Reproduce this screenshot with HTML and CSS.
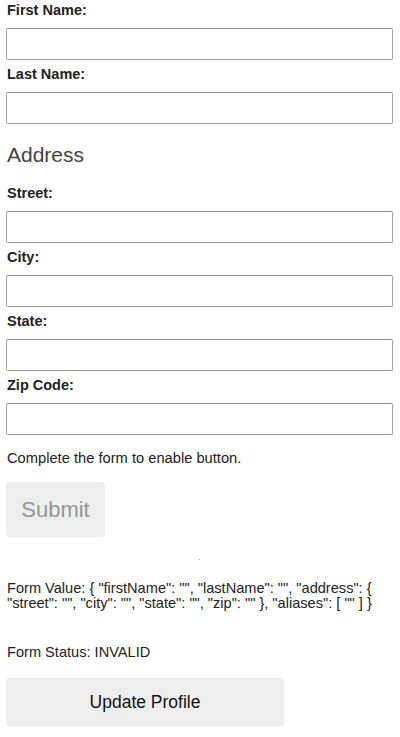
FILE: index.html
```html
<!DOCTYPE html>
<html>
<head>
<meta charset="utf-8">
<link rel="stylesheet" href="styles.css">
</head>
<body>
<div class="page">
  <form class="profile">
    <div class="field">
      <label class="label">First Name:</label>
      <input class="input" type="text">
    </div>
    <div class="field">
      <label class="label">Last Name:</label>
      <input class="input" type="text">
    </div>
    <div class="address">
      <h2 class="heading">Address</h2>
      <div class="field">
        <label class="label">Street:</label>
        <input class="input" type="text">
      </div>
      <div class="field">
        <label class="label">City:</label>
        <input class="input" type="text">
      </div>
      <div class="field">
        <label class="label">State:</label>
        <input class="input" type="text">
      </div>
      <div class="field">
        <label class="label">Zip Code:</label>
        <input class="input" type="text">
      </div>
    </div>
    <p class="hint">Complete the form to enable button.</p>
    <button class="submit" type="button" disabled>Submit</button>
  </form>
  <div class="divider"><span class="dot"></span></div>
  <p class="value">Form Value: { "firstName": "", "lastName": "", "address": { "street": "", "city": "", "state": "", "zip": "" }, "aliases": [ "" ] }</p>
  <p class="status">Form Status: INVALID</p>
  <button class="update" type="button">Update Profile</button>
</div>
</body>
</html>
```
FILE: styles.css
```css
html, body {
  margin: 0;
  padding: 0;
  background: #ffffff;
}
body {
  font-family: "Liberation Sans", Arial, sans-serif;
  color: #222;
}
.page {
  width: 387px;
  padding: 2px 0 0 6px;
}
.profile {
  display: flex;
  flex-direction: column;
  margin: 0;
}
.field {
  display: flex;
  flex-direction: column;
  padding-bottom: 6px;
}
.label {
  display: block;
  font-size: 14.5px;
  line-height: 16px;
  font-weight: bold;
  color: #222;
  margin: 0 0 10px 1px;
}
.input {
  box-sizing: border-box;
  width: 387px;
  height: 32px;
  margin: 0;
  border: 1px solid #a3a3a3;
  border-top-color: #8a8a8a;
  border-radius: 2px;
  background: #fff;
  font-family: inherit;
  font-size: 13px;
  padding: 0 6px;
}
.address {
  display: flex;
  flex-direction: column;
}
.heading {
  font-size: 21px;
  line-height: 24px;
  font-weight: normal;
  color: #444;
  margin: 13px 0 18px 1px;
}
.hint {
  font-size: 14.7px;
  line-height: 16px;
  color: #222;
  margin: 9px 0 16px 1px;
}
.submit {
  align-self: flex-start;
  box-sizing: border-box;
  width: 99px;
  height: 55px;
  border: none;
  border-radius: 4px;
  background: #eeeeee;
  color: #979797;
  font-family: inherit;
  font-size: 22px;
  line-height: 25px;
  padding: 0;
  margin: 0;
}
.divider {
  display: flex;
  justify-content: center;
  padding-top: 22px;
  height: 1px;
}
.dot {
  display: block;
  width: 1px;
  height: 1px;
  background: #b5b5b5;
}
.value {
  font-size: 14.6px;
  line-height: 15px;
  color: #222;
  margin: 21px 0 0 1px;
}
.status {
  font-size: 14.6px;
  line-height: 15px;
  color: #222;
  margin: 34px 0 0 1px;
}
.update {
  box-sizing: border-box;
  width: 278px;
  height: 49px;
  margin: 18px 0 0 0;
  border: none;
  border-radius: 4px;
  background: #eeeeee;
  color: #111;
  font-family: inherit;
  font-size: 17.5px;
  line-height: 21px;
  padding: 0;
}
```
